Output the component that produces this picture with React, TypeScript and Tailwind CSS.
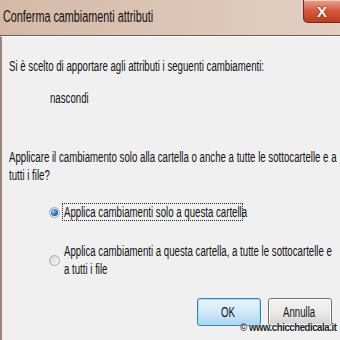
import React from "react";

const font = { fontFamily: '"Liberation Sans", Arial, sans-serif' };

function T({ children, className = "" }: { children: React.ReactNode; className?: string }) {
  return (
    <span className={`inline-block origin-left scale-x-[0.69] whitespace-nowrap ${className}`}>{children}</span>
  );
}

function Radio({ checked }: { checked?: boolean }) {
  return (
    <span className="relative inline-flex h-[11px] w-[11px] shrink-0 items-center justify-center rounded-full border border-[#a9a9a9] bg-gradient-to-br from-[#d4d4d4] to-[#fbfbfb]">
      {checked && (
        <span className="h-[7px] w-[7px] rounded-full bg-[radial-gradient(circle_at_35%_35%,#9ad2f7_0%,#2d7bc4_45%,#0d3f7a_100%)]" />
      )}
    </span>
  );
}

export default function App() {
  return (
    <div className="relative h-[340px] w-[340px] overflow-hidden bg-[#f0f0f0] text-[#111]" style={font}>
      {/* title bar */}
      <div className="relative flex h-[36px] items-start border-b border-[#6f5e55] bg-gradient-to-r from-[#d4b9a6] via-[#dcc4b4] to-[#e3d0c3]">
        <div className="pl-[3px] pt-[8px] text-[16px] leading-[18px]">
          <span className="inline-block origin-left scale-x-[0.675] whitespace-nowrap">Conferma cambiamenti attributi</span>
        </div>
        <div className="absolute right-0 top-0 flex h-[23px] w-[37px] items-center justify-center rounded-bl-[5px] border-b border-l border-[#6a2f22] bg-gradient-to-b from-[#e7a290] via-[#d3583d] to-[#c23b1e] shadow-[inset_0_1px_0_rgba(255,255,255,0.5)]">
          <span className="text-[15px] font-bold leading-none text-white [text-shadow:0_0_2px_#5a1a0c]">X</span>
        </div>
      </div>
      {/* content */}
      <div className="flex h-[304px] flex-col border-l-2 border-t border-l-[#9c8576] border-t-white pl-[7px] text-[14px] leading-[18px]">
        <div className="mt-[20px] h-[18px]">
          <T>Si è scelto di apportare agli attributi i seguenti cambiamenti:</T>
        </div>
        <div className="mt-[14px] h-[18px] pl-[41px]">
          <T>nascondi</T>
        </div>
        <div className="mt-[41px] h-[18px]">
          <T>Applicare il cambiamento solo alla cartella o anche a tutte le sottocartelle e a</T>
        </div>
        <div className="h-[18px]">
          <T>tutti i file?</T>
        </div>
        <div className="mt-[19px] flex h-[18px] items-center pl-[40px]">
          <Radio checked />
          <span className="ml-[2px] h-[18px] w-[181px] border border-dotted border-[#222] pl-[1px] leading-[16px]">
            <T>Applica cambiamenti solo a questa cartella</T>
          </span>
        </div>
        <div className="mt-[21px] flex items-center pl-[40px]">
          <Radio />
          <div className="ml-[4px] flex flex-col">
            <div className="h-[18px]">
              <T>Applica cambiamenti a questa cartella, a tutte le sottocartelle e</T>
            </div>
            <div className="h-[18px]">
              <T>a tutti i file</T>
            </div>
          </div>
        </div>
        <div className="mt-[20px] flex justify-end gap-[7px] pr-[8px]">
          <div className="flex h-[28px] w-[64px] items-center justify-center rounded-[3px] border border-[#3c7fb1] bg-gradient-to-b from-[#e8f4fc] via-[#d2e9f8] to-[#a9d5f2] shadow-[inset_0_0_0_1px_#9fe0ff]">
            <span className="-mr-[4px]">
              <T>OK</T>
            </span>
          </div>
          <div className="flex h-[28px] w-[64px] items-center justify-center rounded-[3px] border border-[#707070] bg-gradient-to-b from-[#f2f2f2] via-[#ebebeb] to-[#d0d0d0] shadow-[inset_0_0_0_1px_#fcfcfc]">
            <span className="-mr-[12px]">
              <T>Annulla</T>
            </span>
          </div>
        </div>
      </div>
      {/* watermark */}
      <div className="absolute left-[240px] top-[322px] whitespace-nowrap text-[10px] font-bold leading-[12px] tracking-[-0.4px] text-[#222] [text-shadow:0_0_2px_#fff,0_0_1px_#fff]" style={{ fontFamily: '"Liberation Sans", Arial, sans-serif' }}>
        <span className="inline-block origin-left scale-x-[0.95]">© www.chicchedicala.it</span>
      </div>
    </div>
  );
}
